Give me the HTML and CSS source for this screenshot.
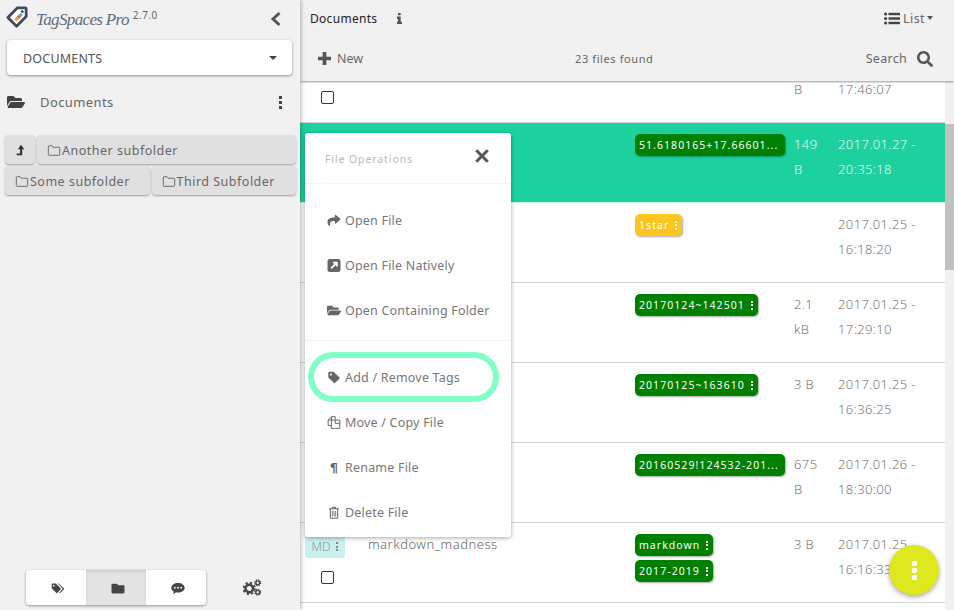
FILE: index.html
```html
<!DOCTYPE html>
<html lang="en">
<head>
    <meta charset="UTF-8">
    <meta name="viewport" content="width=device-width, initial-scale=1.0">
    <title>TagSpaces Pro</title>
    <link rel="stylesheet" href="styles.css">
</head>
<body>
    <svg class="sprite" xmlns="http://www.w3.org/2000/svg">
        <symbol id="i-share" viewBox="0 0 512 512"><path d="M503.691 189.836L327.687 37.851C312.281 24.546 288 35.347 288 56.015v80.053C127.371 137.907 0 170.1 0 322.326c0 61.441 39.581 122.309 83.333 154.132 13.653 9.931 33.111-2.533 28.077-18.631C66.066 312.814 132.917 274.316 288 272.085V360c0 20.7 24.3 31.453 39.687 18.164l176.004-152c11.071-9.562 11.086-26.753 0-36.328z"/></symbol>
        <symbol id="i-search" viewBox="0 0 512 512"><path d="M505 442.7L405.3 343c-4.5-4.5-10.6-7-17-7H372c27.6-35.3 44-79.7 44-128C416 93.1 322.9 0 208 0S0 93.1 0 208s93.1 208 208 208c48.3 0 92.7-16.4 128-44v16.3c0 6.4 2.5 12.5 7 17l99.7 99.7c9.4 9.4 24.6 9.4 33.9 0l28.3-28.3c9.4-9.4 9.4-24.6.1-34zM208 336c-70.7 0-128-57.2-128-128 0-70.7 57.2-128 128-128 70.7 0 128 57.2 128 128 0 70.7-57.2 128-128 128z"/></symbol>
        <symbol id="i-folder-open" viewBox="0 0 576 512"><path d="M572.694 292.093L500.27 416.248A63.997 63.997 0 0 1 444.989 448H45.025c-18.523 0-30.064-20.093-20.731-36.093l72.424-124.155A64 64 0 0 1 152 256h399.964c18.523 0 30.064 20.093 20.73 36.093zM152 224h328v-48c0-26.51-21.49-48-48-48H272l-64-64H48C21.49 64 0 85.49 0 112v278.046l69.077-118.418C86.214 242.25 117.989 224 152 224z"/></symbol>
        <symbol id="i-folder" viewBox="0 0 512 512"><path d="M464 128H272l-64-64H48C21.49 64 0 85.49 0 112v288c0 26.51 21.49 48 48 48h416c26.51 0 48-21.49 48-48V176c0-26.51-21.49-48-48-48z"/></symbol>
        <symbol id="i-folder-line" viewBox="0 0 16 14"><path d="M1.500 2.500a1 1 0 0 1 1-1h3.200l1.400 1.800h6.400a1 1 0 0 1 1 1v7.200a1 1 0 0 1-1 1h-11a1 1 0 0 1-1-1z" fill="none" stroke="currentColor" stroke-width="1.100"/></symbol>
        <symbol id="i-tag" viewBox="0 0 16 16"><path d="M1 2.200C1 1.500 1.500 1 2.200 1h5c.4 0 .7.1 1 .4l6.400 6.400c.5.5.5 1.200 0 1.700l-5.100 5.100c-.5.5-1.200.5-1.700 0L1.400 8.200c-.3-.3-.4-.6-.4-1zM4.300 5.600a1.300 1.300 0 1 0 0-2.600 1.300 1.300 0 0 0 0 2.600z" fill-rule="evenodd"/></symbol>
        <symbol id="i-tags" viewBox="0 0 20 16"><path d="M1 2.200C1 1.500 1.500 1 2.200 1h4.400c.4 0 .7.1 1 .4l6 6.400c.5.5.5 1.200 0 1.700l-4.500 4.700c-.5.5-1.200.5-1.700 0L1.400 8c-.3-.3-.4-.6-.4-1zM4 5.200a1.200 1.200 0 1 0 0-2.400 1.200 1.200 0 0 0 0 2.400z" fill-rule="evenodd"/><path d="M9.500 1h1.200c.4 0 .7.1 1 .4l6.600 6.400c.5.5.5 1.200 0 1.700l-4.700 4.700c-.5.5-1.200.5-1.700 0l-.3-.3 4.500-4.600c.5-.5.5-1.200 0-1.700z"/></symbol>
        <symbol id="i-external" viewBox="0 0 14 14"><path d="M2.500 0h9A2.500 2.500 0 0 1 14 2.500v9a2.500 2.500 0 0 1-2.500 2.500h-9A2.500 2.500 0 0 1 0 11.500v-9A2.500 2.500 0 0 1 2.500 0zM6 3v1.800h1.900L3.200 9.500l1.300 1.300 4.700-4.700V8H11V3z" fill-rule="evenodd"/></symbol>
        <symbol id="i-copy" viewBox="0 0 16 16"><path d="M5 .8h4.500v3.700M5 .8L.8 5v6.700h3.700M5 .8v4.200H.8" fill="none" stroke="currentColor" stroke-width="1.200"/><path d="M4.800 5h10.400v10.200H4.800zM9.500 5v4h5.700" fill="none" stroke="currentColor" stroke-width="1.200"/></symbol>
        <symbol id="i-trash" viewBox="0 0 14 16"><path d="M1 3.500h12M4.500 3.500l.8-2h3.400l.8 2M2.500 3.500v10.500a1 1 0 0 0 1 1h7a1 1 0 0 0 1-1V3.500" fill="none" stroke="currentColor" stroke-width="1.300"/><path d="M5 6v7M7 6v7M9 6v7" stroke="currentColor" stroke-width="1"/></symbol>
        <symbol id="i-comment" viewBox="0 0 20 18"><path d="M10 1c5.200 0 9.500 3 9.500 6.900s-4.300 6.900-9.500 6.900c-1 0-1.800-.1-2.700-.3C6 15.700 4 16.800 2.500 17c.9-1 1.500-2.300 1.600-3.500C2 12.200.5 10.200.5 7.900.5 4 4.800 1 10 1zM5.500 6.600a1.300 1.300 0 1 0 0 2.600 1.300 1.300 0 0 0 0-2.600zm4.500 0a1.300 1.300 0 1 0 0 2.600 1.300 1.300 0 0 0 0-2.600zm4.500 0a1.300 1.300 0 1 0 0 2.600 1.300 1.300 0 0 0 0-2.600z" fill-rule="evenodd"/></symbol>
        <symbol id="i-cogs" viewBox="0 0 20 17">
            <circle cx="6.500" cy="9.500" r="4" fill="none" stroke="currentColor" stroke-width="2.600"/>
            <circle cx="6.500" cy="9.500" r="6" fill="none" stroke="currentColor" stroke-width="2" stroke-dasharray="2.400 2.310"/>
            <circle cx="15.500" cy="3.500" r="2" fill="none" stroke="currentColor" stroke-width="1.500"/>
            <circle cx="15.500" cy="3.500" r="3.100" fill="none" stroke="currentColor" stroke-width="1.200" stroke-dasharray="1.400 1.030"/>
            <circle cx="15.500" cy="13.500" r="2" fill="none" stroke="currentColor" stroke-width="1.500"/>
            <circle cx="15.500" cy="13.500" r="3.100" fill="none" stroke="currentColor" stroke-width="1.200" stroke-dasharray="1.400 1.030"/>
        </symbol>
    </svg>

    <aside class="sidebar">
        <div class="brand">
            <svg class="logo" viewBox="0 0 24 24">
                <path d="M2 12.500L12.500 2H21a1 1 0 0 1 1 1v8.500L11.500 22z" fill="#fff" stroke="#3f4a5e" stroke-width="3" stroke-linejoin="round"/>
                <path d="M9 14.500l3-3 2.500 2.500-3 3z" fill="#f0a32c"/>
                <path d="M12 11.500l2-2 2.500 2.500-2 2z" fill="#e0497a"/>
                <path d="M14 9.500l2-2 2.300 2.300-2 2z" fill="#2cb6c4"/>
                <circle cx="17.800" cy="6.200" r="1.500" fill="#3f4a5e"/>
            </svg>
            <span class="brand-name">TagSpaces Pro</span>
            <span class="version">2.7.0</span>
            <svg class="collapse" viewBox="0 0 12 16"><path d="M9.500 2L3 8l6.500 6" fill="none" stroke="#555" stroke-width="3"/></svg>
        </div>

        <div class="location-select">
            <span>DOCUMENTS</span>
            <span class="caret"></span>
        </div>

        <div class="current-folder">
            <svg class="icon folder-icon"><use href="#i-folder-open"/></svg>
            <span class="current-name">Documents</span>
            <span class="kebab kebab-dark"><i></i><i></i><i></i></span>
        </div>

        <div class="dir-buttons">
            <button class="dir-btn up-btn">
                <svg viewBox="0 0 12 14" class="up-icon"><path d="M6.500 1L10.500 6H8v7H1.500v-2H5.500V6H3z" fill="#333"/></svg>
            </button>
            <button class="dir-btn wide"><svg class="icon line"><use href="#i-folder-line"/></svg>Another subfolder</button>
            <button class="dir-btn half"><svg class="icon line"><use href="#i-folder-line"/></svg>Some subfolder</button>
            <button class="dir-btn half"><svg class="icon line"><use href="#i-folder-line"/></svg>Third Subfolder</button>
        </div>

        <div class="sidebar-footer">
            <div class="tab-group">
                <button class="tab"><svg class="icon tab-icon"><use href="#i-tags"/></svg></button>
                <button class="tab active"><svg class="icon tab-icon"><use href="#i-folder"/></svg></button>
                <button class="tab"><svg class="icon tab-icon"><use href="#i-comment"/></svg></button>
            </div>
            <svg class="icon cogs"><use href="#i-cogs"/></svg>
        </div>
    </aside>

    <main class="content">
        <header class="toolbar">
            <div class="toolbar-top">
                <span class="dir-title">Documents</span>
                <span class="info-i">
                    <svg viewBox="0 0 8 14"><path d="M2 0h3.500v3H2zM.8 4.500h4.700V11h1.700v3H.8v-3h1.300V7.500H.8z"/></svg>
                </span>
                <span class="view-switch">
                    <svg viewBox="0 0 16 13"><circle cx="1.600" cy="2" r="1.600"/><circle cx="1.600" cy="6.500" r="1.600"/><circle cx="1.600" cy="11" r="1.600"/><rect x="4.500" y=".8" width="11.500" height="2.400"/><rect x="4.500" y="5.300" width="11.500" height="2.400"/><rect x="4.500" y="9.800" width="11.500" height="2.400"/></svg>
                    List<span class="caret caret-small"></span>
                </span>
            </div>
            <div class="toolbar-bottom">
                <span class="new-btn">
                    <svg viewBox="0 0 14 14"><path d="M5 0h4v5h5v4H9v5H5V9H0V5h5z"/></svg>
                    New
                </span>
                <span class="found">23 files found</span>
                <span class="search-btn">Search <svg class="icon"><use href="#i-search"/></svg></span>
            </div>
        </header>

        <div class="list-area">
            <div class="file-list">
                <div class="row first">
                    <div class="cell-select"><span class="checkbox"></span></div>
                    <div></div>
                    <div></div>
                    <div class="cell-size">B</div>
                    <div class="cell-date">17:46:07</div>
                </div>
                <div class="row selected">
                    <div class="cell-select"></div>
                    <div></div>
                    <div class="cell-tags"><span class="tag tag-green tag-long">51.6180165+17.66601...</span></div>
                    <div class="cell-size">149 B</div>
                    <div class="cell-date">2017.01.27 - 20:35:18</div>
                </div>
                <div class="row">
                    <div class="cell-select"></div>
                    <div></div>
                    <div class="cell-tags"><span class="tag tag-yellow">1star<span class="kebab"><i></i><i></i><i></i></span></span></div>
                    <div class="cell-size"></div>
                    <div class="cell-date">2017.01.25 - 16:18:20</div>
                </div>
                <div class="row">
                    <div class="cell-select"></div>
                    <div></div>
                    <div class="cell-tags"><span class="tag tag-green">20170124~142501<span class="kebab"><i></i><i></i><i></i></span></span></div>
                    <div class="cell-size">2.1 kB</div>
                    <div class="cell-date">2017.01.25 - 17:29:10</div>
                </div>
                <div class="row">
                    <div class="cell-select"></div>
                    <div></div>
                    <div class="cell-tags"><span class="tag tag-green">20170125~163610<span class="kebab"><i></i><i></i><i></i></span></span></div>
                    <div class="cell-size">3 B</div>
                    <div class="cell-date">2017.01.25 - 16:36:25</div>
                </div>
                <div class="row">
                    <div class="cell-select"></div>
                    <div></div>
                    <div class="cell-tags"><span class="tag tag-green tag-long">20160529!124532-201...</span></div>
                    <div class="cell-size">675 B</div>
                    <div class="cell-date">2017.01.26 - 18:30:00</div>
                </div>
                <div class="row">
                    <div class="cell-select">
                        <span class="ext">MD<span class="kebab"><i></i><i></i><i></i></span></span>
                        <span class="checkbox"></span>
                    </div>
                    <div class="cell-name">markdown_madness</div>
                    <div class="cell-tags">
                        <span class="tag tag-green">markdown<span class="kebab"><i></i><i></i><i></i></span></span>
                        <span class="tag tag-green">2017-2019<span class="kebab"><i></i><i></i><i></i></span></span>
                    </div>
                    <div class="cell-size">3 B</div>
                    <div class="cell-date">2017.01.25 - 16:16:33</div>
                </div>
            </div>
            <div class="scrollbar"><div class="thumb"></div></div>
        </div>
    </main>

    <div class="file-menu">
        <div class="menu-head">
            <span>File Operations</span>
            <svg viewBox="0 0 14 14"><path d="M2 2l10 10M12 2L2 12" stroke="#555" stroke-width="2.600" fill="none"/></svg>
        </div>
        <ul class="menu-list">
            <li><svg class="icon"><use href="#i-share"/></svg>Open File</li>
            <li><svg class="icon"><use href="#i-external"/></svg>Open File Natively</li>
            <li><svg class="icon"><use href="#i-folder-open"/></svg>Open Containing Folder</li>
        </ul>
        <ul class="menu-list second">
            <li><svg class="icon"><use href="#i-tag"/></svg>Add / Remove Tags</li>
            <li><svg class="icon"><use href="#i-copy"/></svg>Move / Copy File</li>
            <li><span class="pilcrow">¶</span>Rename File</li>
            <li><svg class="icon"><use href="#i-trash"/></svg>Delete File</li>
        </ul>
    </div>
    <div class="tag-ring"></div>

    <button class="fab"><i></i><i></i><i></i></button>
</body>
</html>
```

FILE: styles.css
```css
* {
    box-sizing: border-box;
}
html, body {
    height: 100%;
}
body {
    margin: 0;
    display: flex;
    overflow: hidden;
    font-family: "Noto Sans", sans-serif;
    font-size: 13px;
    color: #666;
    background-color: #fff;
}
button {
    font: inherit;
    color: inherit;
    border: none;
    padding: 0;
}
ul {
    list-style: none;
    margin: 0;
    padding: 0;
}
.sprite {
    display: none;
}
.icon {
    fill: currentColor;
    flex: none;
}

/* sidebar */
.sidebar {
    width: 300px;
    flex: none;
    display: flex;
    flex-direction: column;
    position: relative;
    z-index: 2;
    background-color: #f1f1f1;
    box-shadow: 1px 0 4px rgba(0, 0, 0, 0.3);
}
.brand {
    height: 40px;
    display: flex;
    align-items: flex-start;
    padding: 6px 0 0 6px;
}
.logo {
    width: 22px;
    height: 22px;
    flex: none;
}
.brand-name {
    margin-left: 8px;
    font-family: "Liberation Serif", serif;
    font-style: italic;
    font-size: 17px;
    letter-spacing: -0.65px;
    color: #5d6a7e;
    line-height: 28px;
}
.version {
    margin-left: 4px;
    font-size: 10px;
    letter-spacing: 0.5px;
    line-height: 18px;
}
.collapse {
    width: 12px;
    height: 16px;
    margin: 5px 18px 0 auto;
}
.location-select {
    height: 35px;
    margin: 0 8px 0 7px;
    padding: 1px 15px 0 16px;
    display: flex;
    align-items: center;
    justify-content: space-between;
    font-size: 12.5px;
    letter-spacing: 0.2px;
    color: #555;
    background-color: #fff;
    border-radius: 4px;
    box-shadow: 0 1px 3px rgba(0, 0, 0, 0.4);
}
.caret {
    width: 0;
    height: 0;
    border-left: 4px solid transparent;
    border-right: 4px solid transparent;
    border-top: 4px solid #444;
}
.current-folder {
    height: 54px;
    display: flex;
    align-items: center;
    padding: 0 18px 0 7px;
    color: #666;
}
.folder-icon {
    width: 18px;
    height: 16px;
    color: #444;
}
.current-name {
    margin-left: 15px;
    letter-spacing: 0.4px;
}
.kebab {
    display: inline-flex;
    flex-direction: column;
    gap: 1.5px;
    margin-left: 6px;
}
.kebab i {
    width: 2px;
    height: 2px;
    background-color: currentColor;
}
.kebab-dark {
    margin-left: auto;
    gap: 2px;
    color: #444;
}
.kebab-dark i {
    width: 3px;
    height: 3px;
}
.dir-buttons {
    display: flex;
    flex-wrap: wrap;
    gap: 2px;
    padding: 6px 4px 0 5px;
}
.dir-btn {
    height: 29px;
    display: flex;
    align-items: center;
    gap: 1px;
    padding: 1px 10px 0;
    font-size: 12.5px;
    letter-spacing: 0.5px;
    white-space: nowrap;
    color: #666;
    background-color: #e0e0e0;
    border-radius: 4px;
    box-shadow: 0 1px 2px rgba(0, 0, 0, 0.35);
}
.up-btn {
    width: 30px;
    justify-content: center;
    padding: 0;
}
.up-icon {
    width: 11px;
    height: 12px;
}
.wide {
    flex: 1 1 200px;
}
.half {
    flex: 1 1 40%;
}
.line {
    width: 14px;
    height: 13px;
    fill: none;
}
.sidebar-footer {
    margin-top: auto;
    padding: 0 0 5px 26px;
    display: flex;
    align-items: center;
}
.tab-group {
    display: flex;
    border-radius: 4px;
    box-shadow: 0 1px 3px rgba(0, 0, 0, 0.4);
    overflow: hidden;
}
.tab {
    width: 60px;
    height: 35px;
    padding: 2px 0 0 4px;
    display: flex;
    align-items: center;
    justify-content: center;
    color: #444;
    background-color: #fff;
}
.tab.active {
    background-color: #e4e4e4;
    box-shadow: inset 0 2px 3px rgba(0, 0, 0, 0.1);
}
.tab-icon {
    width: 14px;
    height: 13px;
}
.cogs {
    width: 19px;
    height: 17px;
    margin-left: 37px;
    color: #444;
}

/* main area */
.content {
    flex: 1;
    min-width: 0;
    display: flex;
    flex-direction: column;
}
.toolbar {
    height: 81px;
    flex: none;
    background-color: #f1f1f1;
    box-shadow: 0 1px 2px rgba(0, 0, 0, 0.4);
    position: relative;
    z-index: 1;
}
.toolbar-top {
    height: 36px;
    display: flex;
    align-items: center;
    padding: 0 21px 0 10px;
}
.dir-title {
    font-size: 12px;
    color: #222;
    letter-spacing: 0.3px;
}
.info-i {
    margin-left: 19px;
    display: flex;
}
.info-i svg {
    width: 7px;
    height: 11px;
    fill: #555;
}
.view-switch {
    margin-left: auto;
    display: flex;
    align-items: center;
    gap: 2px;
    font-size: 12.5px;
    letter-spacing: 0.4px;
}
.view-switch svg {
    width: 18px;
    height: 13px;
    fill: #444;
}
.caret-small {
    margin-left: 0;
    border-left-width: 3.5px;
    border-right-width: 3.5px;
    border-top-color: #555;
}
.toolbar-bottom {
    height: 45px;
    display: grid;
    grid-template-columns: 257px auto 1fr;
    align-items: center;
    padding: 0 21px 0 18px;
}
.new-btn {
    display: flex;
    align-items: center;
    gap: 6px;
    font-size: 12.5px;
}
.new-btn svg {
    width: 13px;
    height: 13px;
    fill: #555;
}
.found {
    font-size: 11px;
    letter-spacing: 0.6px;
}
.search-btn {
    justify-self: end;
    display: flex;
    align-items: center;
    gap: 10px;
    font-size: 12.5px;
    letter-spacing: 0.3px;
}
.search-btn svg {
    width: 16px;
    height: 16px;
    color: #555;
}
.list-area {
    flex: 1;
    min-height: 0;
    display: flex;
}
.file-list {
    flex: 1;
    min-width: 0;
    overflow: hidden;
}
.row {
    height: 80px;
    display: grid;
    grid-template-columns: 63px 267px 159px 44px 1fr;
    padding-top: 9px;
    border-bottom: 1px solid #d4d4d4;
    line-height: 25px;
    font-family: "Open Sans", sans-serif;
    font-weight: 300;
}
.row.first {
    height: 42px;
    padding-top: 0;
}
.first .cell-size, .first .cell-date {
    margin-top: -4px;
}
.selected {
    color: #fff;
    background-color: #1dd19f;
    border-bottom-color: #d2f5ea;
}
.cell-select {
    padding-left: 5px;
    display: flex;
    flex-direction: column;
    align-items: flex-start;
}
.first .cell-select {
    padding-top: 10px;
}
.ext {
    width: 40px;
    height: 23px;
    margin-top: 3px;
    display: flex;
    align-items: center;
    justify-content: center;
    font-size: 12px;
    color: #888;
    background-color: #c8f0ee;
    border-radius: 0 0 3px 3px;
}
.checkbox {
    width: 13px;
    height: 13px;
    margin-left: 16px;
    background-color: #fff;
    border: 1px solid #333;
    border-radius: 2px;
}
.ext + .checkbox {
    margin-top: 13px;
}
.cell-name {
    padding-left: 5px;
    font-family: "Noto Sans", sans-serif;
    letter-spacing: 0.5px;
}
.cell-tags {
    padding-left: 5px;
    display: flex;
    flex-direction: column;
    align-items: flex-start;
    gap: 4px;
    font-family: "Noto Sans", sans-serif;
    font-weight: 400;
}
.cell-size {
    padding-left: 5px;
    padding-right: 8px;
    letter-spacing: 0.4px;
}
.cell-date {
    padding-left: 5px;
    padding-right: 10px;
    letter-spacing: 0.4px;
}
.tag {
    height: 22px;
    margin-top: 2px;
    padding: 0 5px 0 4px;
    display: inline-flex;
    align-items: center;
    font-size: 10.5px;
    letter-spacing: 1.05px;
    white-space: nowrap;
    color: #fff;
    border-radius: 5px;
    box-shadow: 1px 1px 2px rgba(0, 0, 0, 0.35);
}
.tag + .tag {
    margin-top: 0;
}
.tag-long {
    width: 150px;
    overflow: hidden;
}
.tag-green {
    background-color: #008000;
}
.tag-yellow {
    background-color: #ffc61f;
}
.scrollbar {
    width: 9px;
    flex: none;
    background-color: #f1f1f1;
    padding-top: 43px;
}
.thumb {
    height: 146px;
    background-color: #c1c1c1;
}

/* popup menu and overlays */
.file-menu {
    position: absolute;
    z-index: 3;
    left: 305px;
    top: 133px;
    width: 206px;
    height: 404px;
    background-color: #fff;
    border-radius: 3px;
    box-shadow: 0 1px 4px rgba(0, 0, 0, 0.35);
}
.menu-head {
    height: 51px;
    padding: 2px 21px 0 20px;
    display: flex;
    align-items: center;
    justify-content: space-between;
    font-size: 10.5px;
    letter-spacing: 0.9px;
    color: #bbb;
    border-bottom: 1px solid #f4f4f4;
}
.menu-head svg {
    width: 16px;
    height: 16px;
    margin-top: -6px;
}
.menu-list {
    padding: 14px 0 7px;
    border-bottom: 1px solid #f4f4f4;
}
.menu-list.second {
    border-bottom: none;
    padding-top: 14px;
}
.menu-list li {
    height: 45px;
    display: flex;
    align-items: center;
    padding-left: 22px;
    gap: 4px;
    font-size: 12.5px;
    color: #777;
    letter-spacing: 0.2px;
}
.menu-list .icon {
    width: 14px;
    height: 13px;
    color: #666;
}
.pilcrow {
    width: 14px;
    text-align: center;
    font-family: "DejaVu Sans", sans-serif;
    font-weight: 700;
    font-size: 13px;
    color: #666;
}
.tag-ring {
    position: absolute;
    z-index: 4;
    left: 308px;
    top: 352px;
    width: 191px;
    height: 50px;
    border: 6px solid #80ffc6;
    border-radius: 25px;
}
.fab {
    position: absolute;
    z-index: 4;
    left: 889px;
    top: 545px;
    width: 50px;
    height: 50px;
    display: flex;
    flex-direction: column;
    align-items: center;
    justify-content: center;
    gap: 2px;
    background-color: #dde81e;
    border-radius: 50%;
    box-shadow: 0 2px 5px rgba(0, 0, 0, 0.35);
}
.fab i {
    width: 5px;
    height: 5px;
    background-color: #fff;
    border-radius: 1px;
}
```
